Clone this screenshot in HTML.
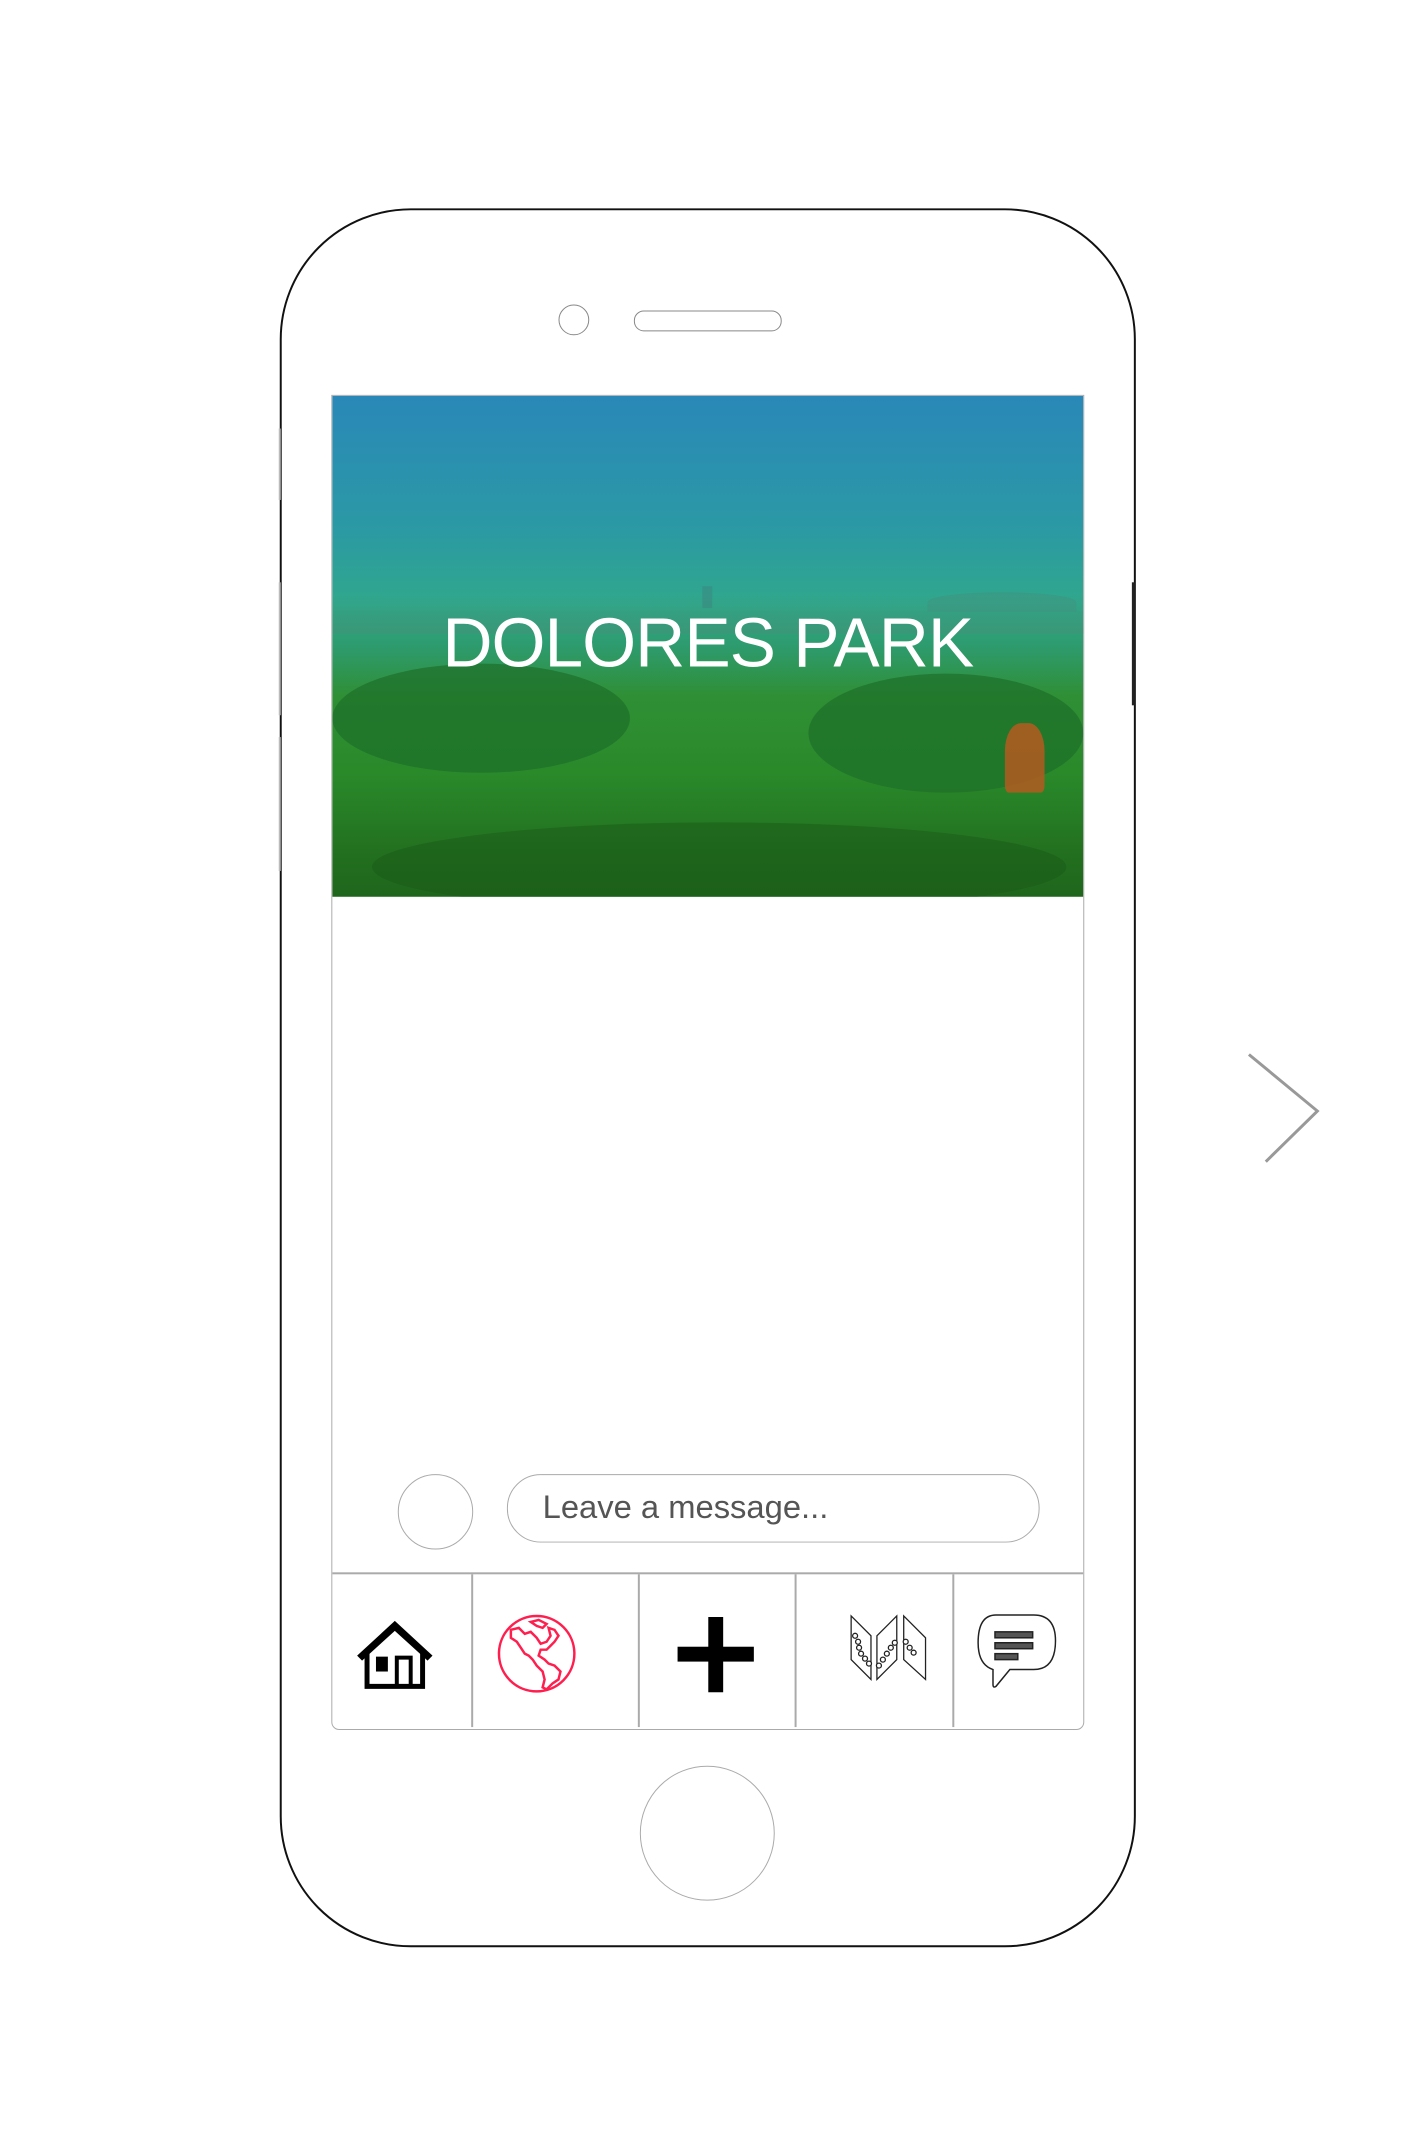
<!DOCTYPE html>
<html><head><meta charset="utf-8"><style>
html,body{margin:0;padding:0;background:#fff;}
body{width:1414px;height:2149px;position:relative;overflow:hidden;font-family:"Liberation Sans",sans-serif;}
.abs{position:absolute;}
#w{position:absolute;left:0;top:0;width:1414px;height:2149px;transform:scale(0.992);transform-origin:0 0;}
</style></head><body><div id="w">
<!-- phone body -->
<div class="abs" style="left:282px;top:210px;width:859px;height:1749px;border:2px solid #111;border-radius:132px;"></div>
<!-- side buttons -->
<div class="abs" style="left:281px;top:432px;width:2px;height:72px;background:#bbb"></div>
<div class="abs" style="left:281px;top:587px;width:2px;height:134px;background:#bbb"></div>
<div class="abs" style="left:281px;top:743px;width:2px;height:135px;background:#bbb"></div>
<div class="abs" style="left:1141px;top:587px;width:3px;height:124px;background:#222"></div>
<!-- camera & speaker -->
<div class="abs" style="left:563px;top:307px;width:29px;height:29px;border:1.5px solid #888;border-radius:50%;"></div>
<div class="abs" style="left:639px;top:313px;width:147px;height:19px;border:1.5px solid #888;border-radius:10px;"></div>
<!-- screen -->
<div class="abs" style="left:334px;top:398px;width:757px;height:1344px;border:1.5px solid #aaa;border-radius:0 0 8px 8px;overflow:hidden;">
  <div class="abs" style="left:0;top:0;width:757px;height:505px;background:linear-gradient(180deg,#2a88b8 0%,#2b98a6 25%,#30a88c 42%,#2e9b6e 50%,#2f8f35 60%,#2a8a2a 75%,#226f1f 92%,#1f661c 100%);overflow:hidden;">
    <div class="abs" style="left:0;top:200px;width:757px;height:40px;background:linear-gradient(180deg,rgba(60,150,120,.0),rgba(60,150,120,.8))"></div>
    <div class="abs" style="left:373px;top:192px;width:10px;height:22px;background:#3a8a80;opacity:.6"></div>
    <div class="abs" style="left:600px;top:198px;width:150px;height:20px;background:#3e9680;border-radius:50% 50% 0 0;opacity:.6"></div>
    <div class="abs" style="left:0;top:270px;width:300px;height:110px;background:#1d6f2a;border-radius:50%;opacity:.7"></div>
    <div class="abs" style="left:480px;top:280px;width:277px;height:120px;background:#1d6f2a;border-radius:50%;opacity:.7"></div>
    <div class="abs" style="left:40px;top:430px;width:700px;height:90px;background:#1a5a18;border-radius:50%;opacity:.5"></div>
    <div class="abs" style="left:678px;top:330px;width:40px;height:70px;background:#b45a20;border-radius:40% 40% 10% 10%;opacity:.85"></div>
    <div class="abs" style="left:0;top:204px;width:757px;text-align:center;color:#fff;font-size:70px;line-height:90px;letter-spacing:-1px;">DOLORES PARK</div>
  </div>
  <!-- avatar -->
  <div class="abs" style="left:66px;top:1087px;width:74px;height:74px;border:1.5px solid #aaa;border-radius:50%;"></div>
  <!-- input -->
  <div class="abs" style="left:176px;top:1087px;width:535px;height:67px;border:1.5px solid #aaa;border-radius:34px;"></div>
  <div class="abs" style="left:212px;top:1100px;font-size:33px;line-height:40px;color:#555;">Leave a message...</div>
  <!-- tab bar -->
  <div class="abs" style="left:0;top:1186px;width:757px;height:1.5px;background:#aaa"></div>
  <div class="abs" style="left:140px;top:1188px;width:1.5px;height:154px;background:#aaa"></div>
  <div class="abs" style="left:308px;top:1188px;width:1.5px;height:154px;background:#aaa"></div>
  <div class="abs" style="left:466px;top:1188px;width:1.5px;height:154px;background:#aaa"></div>
  <div class="abs" style="left:625px;top:1188px;width:1.5px;height:154px;background:#aaa"></div>
</div>
<!-- icons -->
<svg class="abs" style="left:358px;top:1631px" width="80" height="72" viewBox="0 0 80 72">
  <path d="M2 38 L40 3 L78 38 L73 43 L40 13 L7 43 Z" fill="#000"/>
  <path d="M12 34 V69 H68 V34" fill="none" stroke="#000" stroke-width="5"/>
  <rect x="21" y="39" width="12" height="15" fill="#000"/>
  <rect x="42" y="40" width="14" height="29" fill="none" stroke="#000" stroke-width="4"/>
</svg>
<svg class="abs" style="left:501px;top:1627px" width="80" height="80" viewBox="0 0 80 80" fill="none" stroke="#ff1f4f" stroke-width="2.5">
  <circle cx="40" cy="40" r="38"/>
  <path d="M14 16 L22 14 L28 20 L34 18 L40 24 L44 30 L50 28 L54 22 L52 14 L58 16 L62 22 L58 28 L54 32 L50 36 L44 36 L42 42 L48 46 L52 50 L58 52 L64 58 L62 66 L56 70 L50 76 L46 74 L48 66 L46 58 L40 52 L36 46 L32 42 L28 40 L24 34 L20 28 L14 24 Z"/>
  <path d="M34 8 L42 6 L50 10 L46 14 L40 12 Z"/>
</svg>
<svg class="abs" style="left:683px;top:1630px" width="77" height="76" viewBox="0 0 77 76">
  <rect x="31" y="0" width="15" height="76" fill="#000"/>
  <rect x="0" y="30" width="77" height="15" fill="#000"/>
</svg>
<svg class="abs" style="left:856px;top:1627px" width="80" height="70" viewBox="0 0 80 70" fill="none" stroke="#222" stroke-width="1.3">
  <path d="M2 2 L22 22 L22 66 L2 46 Z"/>
  <path d="M28 22 L48 2 L48 46 L28 66 Z"/>
  <path d="M55 2 L77 24 L77 66 L55 46 Z"/>
  <g fill="#fff"><circle cx="6" cy="22" r="2.5"/><circle cx="9" cy="28" r="2.5"/><circle cx="10" cy="34" r="2.5"/><circle cx="12" cy="40" r="2.5"/><circle cx="16" cy="45" r="2.5"/><circle cx="20" cy="50" r="2.5"/><circle cx="30" cy="52" r="2.5"/><circle cx="34" cy="46" r="2.5"/><circle cx="38" cy="40" r="2.5"/><circle cx="42" cy="34" r="2.5"/><circle cx="46" cy="29" r="2.5"/><circle cx="57" cy="28" r="2.5"/><circle cx="61" cy="34" r="2.5"/><circle cx="65" cy="39" r="2.5"/></g>
</svg>
<svg class="abs" style="left:984px;top:1626px" width="82" height="78" viewBox="0 0 82 78" fill="none" stroke="#222" stroke-width="1.5">
  <path d="M20 2 H58 Q80 2 80 28 Q80 57 58 57 H34 L20 74 Q17 76 17 72 V57 Q2 52 2 30 Q2 2 20 2 Z"/>
  <rect x="19" y="19" width="38" height="6" fill="#555"/>
  <rect x="19" y="30" width="38" height="6" fill="#555"/>
  <rect x="19" y="41" width="23" height="6" fill="#555"/>
</svg>
<!-- home button -->
<div class="abs" style="left:645px;top:1780px;width:134px;height:134px;border:1.5px solid #aaa;border-radius:50%;"></div>
<!-- chevron -->
<svg class="abs" style="left:1250px;top:1055px" width="90" height="125" viewBox="0 0 90 125">
  <path d="M9 8 L78 65 L26 116" fill="none" stroke="#999" stroke-width="3"/>
</svg>
</div></body></html>
